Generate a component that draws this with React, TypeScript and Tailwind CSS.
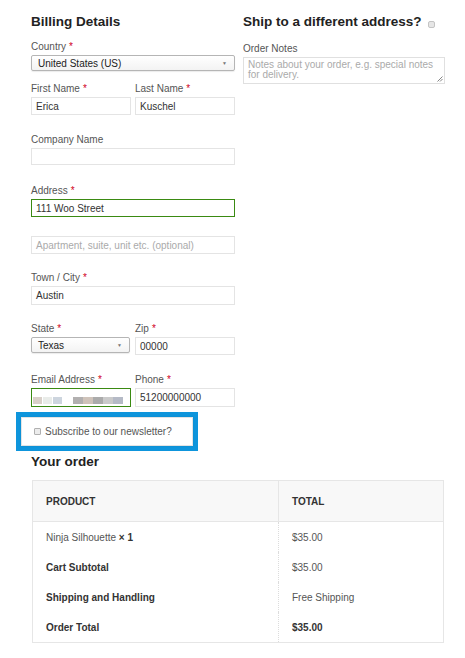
import type { ReactNode } from "react";

const FONT = { fontFamily: '"Liberation Sans", Arial, Helvetica, sans-serif' };

function Label({ text, required }: { text: string; required?: boolean }) {
  return (
    <div className="h-[14px] leading-[14px] text-[10px] text-[#555]">
      {text}
      {required && <span className="text-[#d0021b] ml-[3px]">*</span>}
    </div>
  );
}

function Input({
  value,
  placeholder,
  green,
  h = "h-[18px]",
}: {
  value?: string;
  placeholder?: string;
  green?: boolean;
  h?: string;
}) {
  return (
    <div
      className={`${h} mt-[1px] w-full border flex items-center pl-[4px] text-[10px] ${
        green ? "border-[#3a8a12]" : "border-[#e4e4e4]"
      } ${placeholder ? "text-[#aaa]" : "text-[#333]"}`}
    >
      {value ?? placeholder}
    </div>
  );
}

function Select({ value }: { value: string }) {
  return (
    <div className="h-[16px] mt-[1px] w-full border border-[#b5b5b5] rounded-[2px] bg-gradient-to-b from-white to-[#f3f3f3] shadow-[0_1px_1px_rgba(0,0,0,0.08)] flex items-center justify-between pl-[6px] pr-[7px] text-[10px] text-[#222]">
      <span>{value}</span>
      <span className="text-[5px] text-[#777] leading-none">▼</span>
    </div>
  );
}

function Field({ children, className = "" }: { children: ReactNode; className?: string }) {
  return <div className={className}>{children}</div>;
}

const blurA = ["bg-[#d9d0c9]", "bg-[#e9ece9]", "bg-[#cdd5de]"];
const blurB = ["bg-[#b2b0b0]", "bg-[#cfc3ba]", "bg-[#ababab]", "bg-[#cacaca]", "bg-[#b5bac6]"];

export default function App() {
  return (
    <div className="w-[465px] min-h-[658px] bg-white pl-[31px] pt-[13px]" style={FONT}>
      <div className="flex gap-[8px]">
        {/* Billing column */}
        <div className="w-[204px]">
          <h3 className="text-[13.5px] leading-[18px] font-bold text-[#222]">Billing Details</h3>

          <Field className="mt-[9px]">
            <Label text="Country" required />
            <Select value="United States (US)" />
          </Field>

          <div className="mt-[11px] flex gap-[4px]">
            <Field className="w-[100px]">
              <Label text="First Name" required />
              <Input value="Erica" />
            </Field>
            <Field className="w-[100px]">
              <Label text="Last Name" required />
              <Input value="Kuschel" />
            </Field>
          </div>

          <Field className="mt-[18px]">
            <Label text="Company Name" />
            <Input h="h-[17px]" value="" />
          </Field>

          <Field className="mt-[19px]">
            <Label text="Address" required />
            <Input value="111 Woo Street" green />
          </Field>

          <Field className="mt-[19px]">
            <Input placeholder="Apartment, suite, unit etc. (optional)" />
          </Field>

          <Field className="mt-[17px]">
            <Label text="Town / City" required />
            <Input h="h-[19px]" value="Austin" />
          </Field>

          <div className="mt-[17px] flex gap-[5px] items-start">
            <Field className="w-[99px]">
              <Label text="State" required />
              <Select value="Texas" />
            </Field>
            <Field className="w-[100px]">
              <Label text="Zip" required />
              <Input value="00000" />
            </Field>
          </div>

          <div className="mt-[18px] flex gap-[4px]">
            <Field className="w-[100px]">
              <Label text="Email Address" required />
              <div className="h-[19px] mt-[1px] border border-[#3a8a12] flex items-end pb-[2px] pl-[1px]">
                <div className="flex">
                  {blurA.map((c) => (
                    <div key={c} className={`${c} w-[9px] h-[7px] mr-[1px]`} />
                  ))}
                </div>
                <div className="flex ml-[10px]">
                  {blurB.map((c) => (
                    <div key={c} className={`${c} w-[10px] h-[7px]`} />
                  ))}
                </div>
              </div>
            </Field>
            <Field className="w-[100px]">
              <Label text="Phone" required />
              <Input h="h-[19px]" value="51200000000" />
            </Field>
          </div>
        </div>

        {/* Shipping column */}
        <div className="w-[202px]">
          <h3 className="text-[13.5px] leading-[18px] font-bold text-[#222] flex items-center">
            Ship to a different address?
            <span className="ml-[6px] mt-[4px] w-[7px] h-[7px] rounded-[2px] border border-[#c4c4c4] bg-[#e6e6e6]" />
          </h3>
          <div className="mt-[11px]">
            <Label text="Order Notes" />
            <div className="relative mt-[1px] h-[27px] border border-[#e0e0e0] pl-[4px] pt-[2px] text-[10px] leading-[10px] text-[#aaa]">
              Notes about your order, e.g. special notes
              <br />
              for delivery.
              <svg className="absolute right-[1px] bottom-[1px]" width="6" height="6" viewBox="0 0 6 6">
                <line x1="0.5" y1="5.5" x2="5.5" y2="0.5" stroke="#666" strokeWidth="0.8" />
                <line x1="3" y1="5.5" x2="5.5" y2="3" stroke="#666" strokeWidth="0.8" />
              </svg>
            </div>
          </div>
        </div>
      </div>

      {/* Newsletter highlight */}
      <div className="mt-[5px] ml-[-15px] w-[182px] h-[39px] border-[5px] border-[#0e95dc]">
        <div className="h-full border border-[#e4e4e4] shadow-[0_0_2px_rgba(0,0,0,0.08)] flex items-center pl-[12px] text-[10px] text-[#555]">
          <span className="w-[7px] h-[7px] rounded-[1px] border border-[#b0b0b0] bg-[#ececec]" />
          <span className="ml-[4px]">Subscribe to our newsletter?</span>
        </div>
      </div>

      <h3 className="mt-[2px] text-[13.5px] leading-[18px] font-bold text-[#222]">Your order</h3>

      <div className="mt-[9px] ml-[1px] w-[412px] border border-[#e6e6e6] text-[10px]">
        <div className="flex h-[41px] bg-[#f8f8f8] border-b border-[#e6e6e6] font-bold text-[#333]">
          <div className="w-[246px] border-r border-[#e6e6e6] flex items-center pl-[13px]">PRODUCT</div>
          <div className="flex-1 flex items-center pl-[13px]">TOTAL</div>
        </div>
        {[
          {
            l: (
              <span>
                Ninja Silhouette <b className="text-[#333]">× 1</b>
              </span>
            ),
            r: "$35.00",
            lb: false,
            rb: false,
          },
          { l: "Cart Subtotal", r: "$35.00", lb: true, rb: false },
          { l: "Shipping and Handling", r: "Free Shipping", lb: true, rb: false },
          { l: "Order Total", r: "$35.00", lb: true, rb: true },
        ].map((row, i) => (
          <div key={i} className="flex h-[30px]">
            <div
              className={`w-[246px] border-r border-dotted border-[#dcdcdc] flex items-center pl-[13px] ${
                row.lb ? "font-bold text-[#333]" : "text-[#555]"
              }`}
            >
              {row.l}
            </div>
            <div
              className={`flex-1 flex items-center pl-[13px] ${row.rb ? "font-bold text-[#333]" : "text-[#555]"}`}
            >
              {row.r}
            </div>
          </div>
        ))}
      </div>
    </div>
  );
}
